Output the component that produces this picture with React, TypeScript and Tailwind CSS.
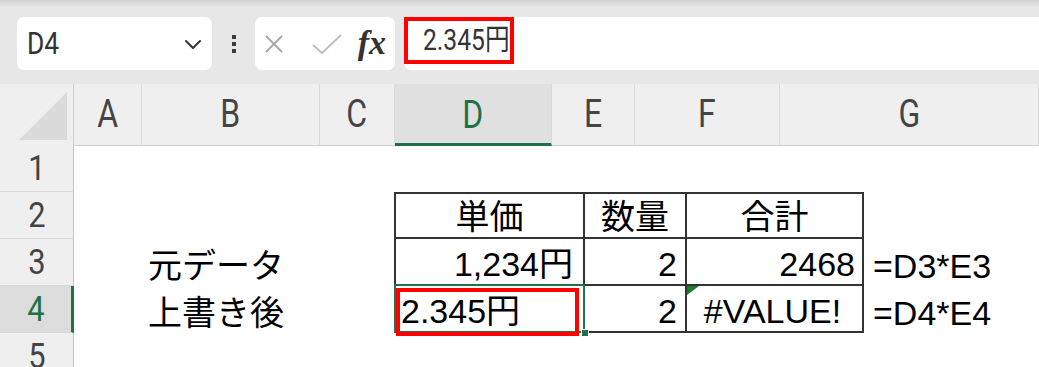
import React from "react";

const UI = "font-['Roboto','Noto_Sans_CJK_JP',sans-serif]";
const SHEET = "font-['Liberation_Sans','Noto_Sans_CJK_JP',sans-serif]";

function Chevron() {
  return (
    <svg width="18" height="12" viewBox="0 0 18 12" fill="none">
      <path d="M2 3 L9 10 L16 3" stroke="#333" strokeWidth="2" strokeLinecap="round" strokeLinejoin="round" />
    </svg>
  );
}

function XIcon() {
  return (
    <svg width="20" height="20" viewBox="0 0 20 20" fill="none">
      <path d="M2 2 L18 18 M18 2 L2 18" stroke="#a8a8a8" strokeWidth="1.8" />
    </svg>
  );
}

function CheckIcon() {
  return (
    <svg width="32" height="22" viewBox="0 0 32 22" fill="none">
      <path d="M2 12 L11 20 L30 2" stroke="#bdbdbd" strokeWidth="1.8" />
    </svg>
  );
}

const headerCols: { label: string; w: string; sel?: boolean }[] = [
  { label: "A", w: "w-[68px]" },
  { label: "B", w: "w-[178px]" },
  { label: "C", w: "w-[75px]" },
  { label: "D", w: "w-[157px]", sel: true },
  { label: "E", w: "w-[83px]" },
  { label: "F", w: "w-[145px]" },
  { label: "G", w: "flex-1" },
];

const rowHeights = ["h-[46px]", "h-[47px]", "h-[47px]", "h-[47px]", "h-[47px]"];

export default function App() {
  return (
    <div className="w-[1039px] h-[367px] overflow-hidden bg-white flex flex-col">
      {/* Toolbar */}
      <div className={`h-[84px] shrink-0 flex items-start pt-[17px] pl-[17px] bg-[linear-gradient(#d2d2d2,#e7e7e7_7px)] ${UI}`}>
        <div className="w-[195px] h-[53px] rounded-[7px] bg-white flex items-center justify-between pl-[10px] pr-[10px]">
          <span className="inline-block origin-left scale-x-[0.85] text-[31px] leading-none text-[#333]">D4</span>
          <Chevron />
        </div>
        <div className="w-[43px] h-[53px] flex flex-col items-center justify-center gap-[3px]">
          <div className="w-[4px] h-[4px] bg-[#3a3a3a]" />
          <div className="w-[4px] h-[4px] bg-[#3a3a3a]" />
          <div className="w-[4px] h-[4px] bg-[#3a3a3a]" />
        </div>
        <div className="w-[140px] h-[53px] rounded-[7px] bg-white flex items-center pl-[9px] pr-[9px]">
          <XIcon />
          <div className="ml-[27px]">
            <CheckIcon />
          </div>
          <span className="ml-auto font-['Liberation_Serif',serif] italic font-bold text-[34px] leading-none text-[#333] pb-[2px]">fx</span>
        </div>
        <div className="ml-[9px] flex-1 h-[53px] rounded-l-[7px] bg-white relative">
          <div className="w-[110px] h-[47px] border-[4px] border-[#ff0000] flex items-center pl-[15px] whitespace-nowrap">
            <span className="inline-block origin-left scale-x-[0.85] text-[29px] leading-none text-[#333]">2.345円</span>
          </div>
        </div>
      </div>

      {/* Column headers */}
      <div className={`h-[62px] shrink-0 flex bg-[#efefef] ${UI}`}>
        <div className="w-[74px] h-full border-r border-[#cfcfcf] flex items-end justify-end pr-[6px] pb-[6px] relative">
          <div className="w-[48px] h-[48px] bg-[#dadada] [clip-path:polygon(100%_0,100%_100%,0_100%)]" />
        </div>
        {headerCols.map((c) => (
          <div
            key={c.label}
            className={`${c.w} h-full flex items-center justify-center border-r border-[#dadada] text-[39px] leading-none ${
              c.sel
                ? "bg-[#e0e0e0] text-[#1e7145] border-b-[3px] border-b-[#1e7145] pt-[3px]"
                : "text-[#444] border-b border-b-[#d0d0d0]"
            }`}
          >
            <span className="inline-block scale-x-[0.82]">{c.label}</span>
          </div>
        ))}
      </div>

      {/* Body */}
      <div className="flex-1 flex">
        {/* Row headers */}
        <div className={`w-[74px] shrink-0 flex flex-col bg-[#efefef] ${UI}`}>
          {rowHeights.map((h, i) => (
            <div
              key={i}
              className={`${h} shrink-0 flex items-center justify-center border-b border-b-[#d8d8d8] text-[35px] leading-none ${
                i === 3
                  ? "bg-[#dcdcdc] text-[#1e7145] border-r-[3px] border-r-[#1e7145]"
                  : "text-[#444] border-r border-r-[#c4c4c4]"
              }`}
            >
              <span className="inline-block scale-x-[0.88]">{i + 1}</span>
            </div>
          ))}
        </div>

        {/* Cells */}
        <div className={`flex-1 flex flex-col text-black text-[34px] leading-none ${SHEET}`}>
          {/* Row 1 */}
          <div className="h-[46px] shrink-0" />
          {/* Row 2 */}
          <div className="h-[47px] shrink-0 grid grid-cols-[320px_191px_102px_177px_1fr]">
            <div />
            <div className="border-2 border-[#333] flex items-end justify-center pb-[3px]">単価</div>
            <div className="border-t-2 border-r-2 border-b-2 border-[#333] flex items-end justify-center pb-[3px]">数量</div>
            <div className="border-t-2 border-r-2 border-b-2 border-[#333] flex items-end justify-center pb-[3px]">合計</div>
            <div />
          </div>
          {/* Row 3 */}
          <div className="h-[47px] shrink-0 grid grid-cols-[320px_191px_102px_177px_1fr]">
            <div className="flex items-end pl-[74px] pb-[3px] whitespace-nowrap">元データ</div>
            <div className="border-l-2 border-r-2 border-b-2 border-[#333] flex items-end justify-end pr-[10px] pb-[3px] whitespace-nowrap">1,234円</div>
            <div className="border-r-2 border-b-2 border-[#333] flex items-end justify-end pr-[8px] pb-[3px]">2</div>
            <div className="border-r-2 border-b-2 border-[#333] flex items-end justify-end pr-[7px] pb-[3px]">2468</div>
            <div className="flex items-end pl-[9px] pb-[3px] whitespace-nowrap">=D3*E3</div>
          </div>
          {/* Row 4 */}
          <div className="h-[47px] shrink-0 grid grid-cols-[320px_191px_102px_177px_1fr]">
            <div className="flex items-end pl-[74px] pb-[3px] whitespace-nowrap">上書き後</div>
            <div className="border-l-2 border-r-2 border-b-2 border-[#333] relative">
              <div className="absolute -left-[2px] -top-[2px] -right-[2px] -bottom-[2px] border-2 border-[#217346]" />
              <div className="absolute left-0 top-[2px] w-[183px] h-[48px] border-[4px] border-[#ff0000] flex items-end pl-[1px] pb-[4px] z-10 whitespace-nowrap">
                2.345円
              </div>
              <div className="absolute -right-[6px] -bottom-[6px] w-[8px] h-[8px] bg-[#217346] border border-white z-20" />
            </div>
            <div className="border-r-2 border-b-2 border-[#333] flex items-end justify-end pr-[8px] pb-[3px]">2</div>
            <div className="border-r-2 border-b-2 border-[#333] relative flex items-end justify-center pb-[3px] pr-[4px] whitespace-nowrap">
              <div className="absolute left-0 top-0 w-0 h-0 border-t-[9px] border-t-[#1b7d2f] border-r-[12px] border-r-transparent" />
              #VALUE!
            </div>
            <div className="flex items-end pl-[9px] pb-[3px] whitespace-nowrap">=D4*E4</div>
          </div>
          {/* Row 5 */}
          <div className="h-[47px] shrink-0" />
        </div>
      </div>
    </div>
  );
}
